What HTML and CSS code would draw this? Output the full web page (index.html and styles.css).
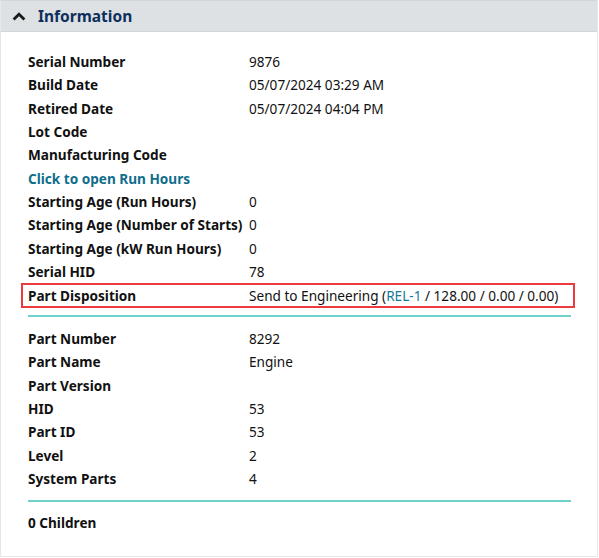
FILE: index.html
```html
<!DOCTYPE html>
<html lang="en">
<head>
  <meta charset="UTF-8" />
  <title>Information</title>
  <link rel="stylesheet" href="styles.css">
</head>
<body>
  <div class="panel">
    <div class="panel-header">
      <svg class="chevron" width="14" height="9" viewBox="0 0 14 9">
        <path d="M1.6 7.6 L7 2.2 L12.4 7.6" fill="none" stroke="#1a1a1a" stroke-width="2.8" />
      </svg>
      <span class="panel-title">Information</span>
    </div>

    <div class="panel-body">
      <div class="group">
        <div class="row"><span class="label">Serial Number</span><span class="value">9876</span></div>
        <div class="row"><span class="label">Build Date</span><span class="value">05/07/2024 03:29 AM</span></div>
        <div class="row"><span class="label">Retired Date</span><span class="value">05/07/2024 04:04 PM</span></div>
        <div class="row"><span class="label">Lot Code</span><span class="value"></span></div>
        <div class="row"><span class="label">Manufacturing Code</span><span class="value"></span></div>
        <div class="row"><a class="label link" href="#">Click to open Run Hours</a></div>
        <div class="row"><span class="label">Starting Age (Run Hours)</span><span class="value">0</span></div>
        <div class="row"><span class="label">Starting Age (Number of Starts)</span><span class="value">0</span></div>
        <div class="row"><span class="label">Starting Age (kW Run Hours)</span><span class="value">0</span></div>
        <div class="row"><span class="label">Serial HID</span><span class="value">78</span></div>
        <div class="row highlight">
          <span class="label">Part Disposition</span>
          <span class="value">Send to Engineering (<a class="ref" href="#">REL-1</a> / 128.00 / 0.00 / 0.00)</span>
        </div>
      </div>

      <div class="group parts">
        <div class="row"><span class="label">Part Number</span><span class="value">8292</span></div>
        <div class="row"><span class="label">Part Name</span><span class="value">Engine</span></div>
        <div class="row"><span class="label">Part Version</span><span class="value"></span></div>
        <div class="row"><span class="label">HID</span><span class="value">53</span></div>
        <div class="row"><span class="label">Part ID</span><span class="value">53</span></div>
        <div class="row"><span class="label">Level</span><span class="value">2</span></div>
        <div class="row"><span class="label">System Parts</span><span class="value">4</span></div>
      </div>

      <div class="children">0 Children</div>
    </div>
  </div>
</body>
</html>
```

FILE: styles.css
```css
body {
  margin: 0;
  font-family: "Noto Sans", sans-serif;
  font-size: 13.6px;
  color: #111;
  background: #fff;
}
.panel {
  width: 596px;
  height: 556px;
  border: 1px solid #e6e7e8;
  border-top: none;
}
.panel-header {
  display: flex;
  align-items: center;
  height: 30px;
  background: #dee1e3;
  border: 1px solid #d3d6d8;
  border-left: none;
  border-right: none;
  padding-left: 11px;
}
.chevron {
  margin-right: 12px;
}
.panel-title {
  font-size: 15.5px;
  font-weight: bold;
  color: #0d2f5c;
}
.panel-body {
  padding: 18px 26px 0 27px;
}
.group {
  border-bottom: 2px solid #6fd1cc;
  padding-bottom: 7px;
  margin-bottom: 10px;
}
.group.parts {
  padding-bottom: 10px;
  margin-bottom: 9px;
}
.row {
  display: grid;
  grid-template-columns: 221px 1fr;
  height: 23.3px;
  align-items: center;
}
.label {
  font-weight: bold;
}
.link {
  color: #0f6e8c;
  text-decoration: none;
  white-space: nowrap;
}
.ref {
  color: #1a7a9a;
  text-decoration: none;
}
.highlight {
  height: 21px;
  margin: 0 -4px 0 -7px;
  padding-left: 5px;
  border: 2px solid #ec3b3f;
}
.children {
  font-weight: bold;
  height: 23px;
  line-height: 23px;
}
```
